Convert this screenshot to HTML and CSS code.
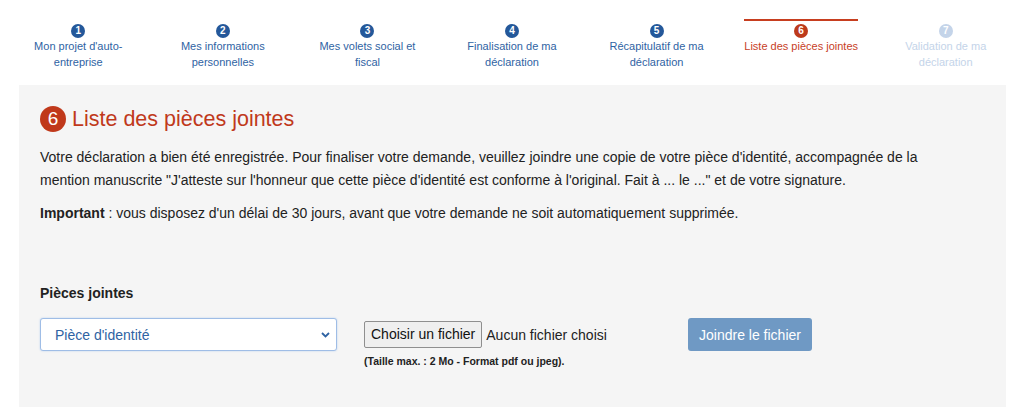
FILE: index.html
```html
<!DOCTYPE html>
<html lang="fr">

<head>
    <meta charset="UTF-8">
    <meta name="viewport" content="width=device-width, initial-scale=1.0">
    <title>Liste des pièces jointes</title>
    <link rel="stylesheet" href="styles.css">
</head>

<body>
    <ol class="steps">
        <li class="step done"><span class="step-box"><span class="step-num">1</span>Mon projet d'auto-entreprise</span></li>
        <li class="step done"><span class="step-box"><span class="step-num">2</span>Mes informations personnelles</span></li>
        <li class="step done"><span class="step-box"><span class="step-num">3</span>Mes volets social et fiscal</span></li>
        <li class="step done"><span class="step-box"><span class="step-num">4</span>Finalisation de ma déclaration</span></li>
        <li class="step done"><span class="step-box"><span class="step-num">5</span>Récapitulatif de ma déclaration</span></li>
        <li class="step active"><span class="step-box"><span class="step-num">6</span>Liste des pièces jointes</span></li>
        <li class="step todo"><span class="step-box"><span class="step-num">7</span>Validation de ma déclaration</span></li>
    </ol>

    <div class="panel">
        <h1 class="title"><span class="title-num">6</span>Liste des pièces jointes</h1>
        <p class="text">Votre déclaration a bien été enregistrée. Pour finaliser votre demande, veuillez joindre une copie de votre pièce d'identité, accompagnée de la mention manuscrite "J'atteste sur l'honneur que cette pièce d'identité est conforme à l'original. Fait à ... le ..." et de votre signature.</p>
        <p class="text"><b>Important</b> : vous disposez d'un délai de 30 jours, avant que votre demande ne soit automatiquement supprimée.</p>

        <div class="attach">
            <label class="attach-label">Pièces jointes</label>
            <div class="attach-row">
                <div class="select">
                    <span>Pièce d'identité</span>
                    <svg width="9" height="6" viewBox="0 0 9 6"><path d="M1 1l3.5 3.5L8 1" fill="none" stroke="#2f63a3" stroke-width="1.8"/></svg>
                </div>
                <div class="file">
                    <div class="file-line">
                        <span class="file-btn">Choisir un fichier</span>
                        <span class="file-name">Aucun fichier choisi</span>
                    </div>
                    <div class="file-hint">(Taille max. : 2 Mo - Format pdf ou jpeg).</div>
                </div>
                <button class="join" type="button">Joindre le fichier</button>
            </div>
        </div>
    </div>
</body>

</html>
```

FILE: styles.css
```css
body {
    margin: 0;
    background-color: #fff;
    font-family: "Liberation Sans", Arial, sans-serif;
    color: #222;
}

.steps {
    display: grid;
    grid-template-columns: repeat(7, 1fr);
    margin: 0;
    padding: 19px 6px 0;
    list-style: none;
    height: 66px;
}

.step {
    text-align: center;
    font-size: 11px;
    line-height: 16px;
}
.step-box {
    display: inline-block;
    max-width: 116px;
    border-top: 2px solid transparent;
}
.step-num {
    display: block;
    width: 14px;
    height: 14px;
    margin: 3px auto 0;
    border-radius: 50%;
    font-size: 10px;
    font-weight: bold;
    line-height: 14px;
    color: #fff;
}

.done { color: #2f63a3; }
.done .step-num { background-color: #24589a; }
.active { color: #c73e1f; }
.active .step-box { border-top-color: #c73e1f; }
.active .step-num { background-color: #bd3a1b; }
.todo { color: #c4d4e9; }
.todo .step-num { background-color: #c4d4e9; }

.panel {
    margin: 0 18px 10px 19px;
    padding: 20px 50px 40px 21px;
    background-color: #f5f5f5;
}

.title {
    display: flex;
    align-items: center;
    margin: 0 0 13px;
    font-size: 21.5px;
    font-weight: normal;
    line-height: 28px;
    color: #c0391b;
}
.title-num {
    width: 26px;
    height: 26px;
    margin-right: 6px;
    border-radius: 50%;
    background-color: #c0391b;
    color: #fff;
    font-size: 19px;
    line-height: 26px;
    text-align: center;
}

.text {
    margin: 0 0 10px;
    font-size: 14px;
    line-height: 23px;
}

.attach {
    margin-top: 58px;
}
.attach-label {
    display: block;
    font-size: 14px;
    font-weight: bold;
    line-height: 20px;
    margin-bottom: 15px;
}
.attach-row {
    display: flex;
    align-items: flex-start;
}

.select {
    display: flex;
    align-items: center;
    justify-content: space-between;
    box-sizing: border-box;
    width: 297px;
    height: 33px;
    padding: 0 6px 0 14px;
    background-color: #fff;
    border: 1px solid #9fbde6;
    border-radius: 3px;
    box-shadow: 0 0 2px #b8d0f0;
    font-size: 14px;
    color: #2f63a3;
}

.file {
    width: 324px;
    margin-left: 27px;
    padding-top: 3px;
}
.file-line {
    display: flex;
    align-items: center;
    font-size: 14px;
}
.file-btn {
    box-sizing: border-box;
    height: 27px;
    padding: 0 6px;
    line-height: 25px;
    background-color: #efefef;
    border: 1px solid #8f8f8f;
    border-radius: 2px;
    color: #111;
}
.file-name {
    margin-left: 4px;
}
.file-hint {
    margin-top: 7px;
    font-size: 10.5px;
    font-weight: bold;
}

.join {
    height: 33px;
    padding: 0 11px;
    border: none;
    border-radius: 3px;
    background-color: #6f99c4;
    color: #fff;
    font-family: inherit;
    font-size: 14px;
}
```
